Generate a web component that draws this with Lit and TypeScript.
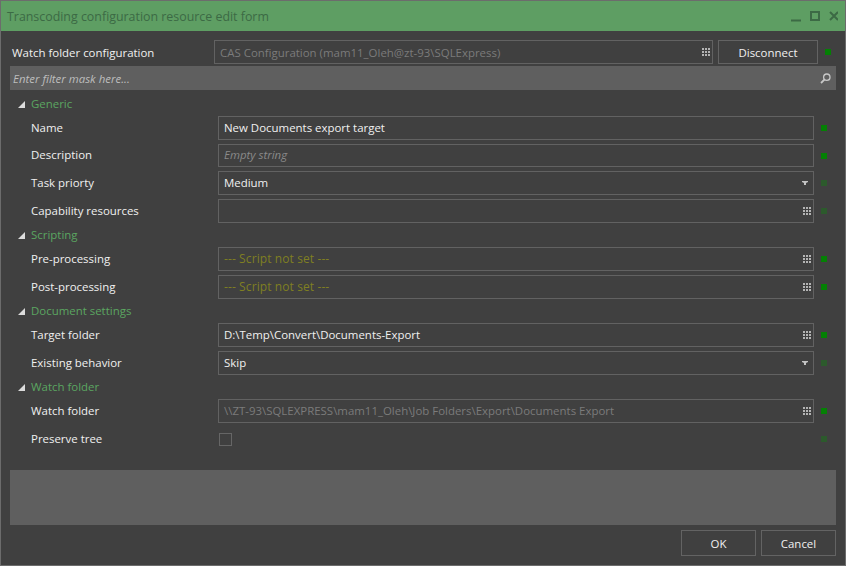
import { LitElement, html, css, nothing } from 'lit';
import { customElement } from 'lit/decorators.js';

type Row = {
  label: string;
  value?: string;
  kind?: 'text' | 'placeholder' | 'script' | 'disabled';
  editor?: 'dots' | 'combo' | 'check';
  dim?: boolean;
  short?: boolean;
};

type Group = { title: string; rows: Row[] };

const groups: Group[] = [
  {
    title: 'Generic',
    rows: [
      { label: 'Name', value: 'New Documents export target' },
      { label: 'Description', value: 'Empty string', kind: 'placeholder', short: true },
      { label: 'Task priorty', value: 'Medium', editor: 'combo', dim: true },
      { label: 'Capability resources', editor: 'dots', dim: true },
    ],
  },
  {
    title: 'Scripting',
    rows: [
      { label: 'Pre-processing', value: '--- Script not set ---', kind: 'script', editor: 'dots' },
      { label: 'Post-processing', value: '--- Script not set ---', kind: 'script', editor: 'dots' },
    ],
  },
  {
    title: 'Document settings',
    rows: [
      { label: 'Target folder', value: 'D:\\Temp\\Convert\\Documents-Export', editor: 'dots' },
      { label: 'Existing behavior', value: 'Skip', editor: 'combo', dim: true },
    ],
  },
  {
    title: 'Watch folder',
    rows: [
      {
        label: 'Watch folder',
        value: '\\\\ZT-93\\SQLEXPRESS\\mam11_Oleh\\Job Folders\\Export\\Documents Export',
        kind: 'disabled',
        editor: 'dots',
      },
      { label: 'Preserve tree', editor: 'check', dim: true },
    ],
  },
];

const dots = html`<svg class="dots" width="8" height="8" viewBox="0 0 8 8" fill="#b4b4b4">
  <rect x="0" y="0" width="2" height="2" /><rect x="3" y="0" width="2" height="2" /><rect x="6" y="0" width="2" height="2" />
  <rect x="0" y="3" width="2" height="2" /><rect x="3" y="3" width="2" height="2" /><rect x="6" y="3" width="2" height="2" />
  <rect x="0" y="6" width="2" height="2" /><rect x="3" y="6" width="2" height="2" /><rect x="6" y="6" width="2" height="2" />
</svg>`;

const arrow = html`<svg class="arrow" width="6" height="4" viewBox="0 0 6 4" fill="#c4c4c4">
  <path d="M0 0h6v1L4 2v2H2V2L0 1z" />
</svg>`;

@customElement('app-root')
export class AppRoot extends LitElement {
  static styles = css`
    :host {
      display: block;
      width: 846px;
      height: 566px;
      font-family: 'Open Sans', 'Noto Sans', sans-serif;
      font-size: 11.45px;
      color: #f0f0f0;
    }

    .window {
      box-sizing: border-box;
      width: 846px;
      height: 566px;
      display: flex;
      flex-direction: column;
      background: #404040;
      border: 1px solid #6c6c6c;
    }

    .titlebar {
      flex: none;
      height: 30px;
      display: flex;
      align-items: center;
      padding: 0 7px 0 6px;
      background: #5e9e63;
      color: #3c6a45;
      font-size: 12.4px;
    }

    .titlebar .title {
      flex: 1;
      padding-top: 1px;
    }

    .titlebar svg {
      display: block;
    }

    .content {
      flex: 1;
      display: flex;
      flex-direction: column;
      padding: 9px 9px 9px;
      min-height: 0;
    }

    .top {
      display: flex;
      align-items: center;
      height: 24px;
      padding-left: 2px;
    }

    .top .label {
      width: 202px;
      flex: none;
    }

    .top .field {
      width: 499px;
      flex: none;
    }

    .top .disconnect {
      width: 100px;
      margin-left: 5px;
      height: 24px;
    }

    .top .mark {
      margin-left: 7px;
    }

    .filter {
      height: 24px;
      margin-top: 2px;
      display: flex;
      align-items: center;
      justify-content: space-between;
      padding: 0 5px 0 3px;
      background: #5f5f5f;
      color: #bdbdbd;
      font-style: italic;
    }

    .groups {
      display: flex;
      flex-direction: column;
      gap: 4px;
      margin-top: 6px;
    }

    .header {
      box-sizing: border-box;
      height: 16px;
      display: flex;
      align-items: center;
      padding: 0 0 1px 8px;
      color: #5ba660;
    }

    .header svg {
      margin: 1px 6px 0 0;
    }

    .row {
      display: grid;
      grid-template-columns: 187px 596px auto;
      align-items: center;
      height: 24px;
      padding-left: 21px;
    }

    .row.short {
      height: 23px;
    }

    .row span {
      padding-bottom: 2px;
    }

    .field {
      box-sizing: border-box;
      height: 100%;
      display: flex;
      align-items: center;
      justify-content: space-between;
      padding: 0 2px 0 5px;
      border: 1px solid #626262;
      white-space: nowrap;
      overflow: hidden;
    }

    .top .field {
      height: 24px;
    }

    .placeholder {
      color: #8a8a8a;
      font-style: italic;
    }

    .script {
      color: #7f7f22;
      font-size: 12px;
      letter-spacing: 0.1px;
    }

    .disabled {
      color: #7b7b7b;
    }

    .dots {
      flex: none;
    }

    .arrow {
      flex: none;
      margin-right: 3px;
    }

    .check {
      box-sizing: border-box;
      width: 13px;
      height: 13px;
      margin-left: 1px;
      border: 1px solid #666666;
    }

    .mark {
      width: 6px;
      height: 6px;
      margin-left: 7px;
      background: #048004;
    }

    .mark.dim {
      background: #2c5a2c;
    }

    .info {
      flex: none;
      height: 55px;
      margin-top: auto;
      background: #5f5f5f;
    }

    .footer {
      flex: none;
      display: flex;
      justify-content: flex-end;
      gap: 5px;
      margin-top: 5px;
    }

    button {
      box-sizing: border-box;
      width: 75px;
      height: 26px;
      padding: 0;
      background: transparent;
      border: 1px solid #636363;
      color: #f0f0f0;
      font: inherit;
    }
  `;

  private renderEditor(row: Row) {
    if (row.editor === 'check') {
      return html`<div><div class="check"></div></div>`;
    }
    return html`<div class="field">
      <span class=${row.kind ?? 'text'}>${row.value ?? nothing}</span>
      ${row.editor === 'dots' ? dots : nothing} ${row.editor === 'combo' ? arrow : nothing}
    </div>`;
  }

  render() {
    return html`
      <div class="window">
        <div class="titlebar">
          <span class="title">Transcoding configuration resource edit form</span>
          <svg width="47" height="12" viewBox="0 0 47 12" fill="none" stroke="#3c6a45" stroke-width="2">
            <path d="M0 10.5h10" />
            <rect x="20" y="2" width="8" height="8" />
            <path d="M39 2l8 8M47 2l-8 8" />
          </svg>
        </div>
        <div class="content">
          <div class="top">
            <span class="label">Watch folder configuration</span>
            <div class="field">
              <span class="disabled">CAS Configuration (mam11_Oleh@zt-93\\SQLExpress)</span>
              ${dots}
            </div>
            <button class="disconnect">Disconnect</button>
            <div class="mark"></div>
          </div>
          <div class="filter">
            <span>Enter filter mask here...</span>
            <svg width="11" height="11" viewBox="0 0 11 11" fill="none" stroke="#c8c8c8">
              <circle cx="6.8" cy="4.2" r="3.2" stroke-width="1.3" />
              <path d="M4.4 6.6L1 10" stroke-width="1.8" />
            </svg>
          </div>
          <div class="groups">
            ${groups.map(
              (group) => html`
                <div class="header">
                  <svg width="7" height="7" viewBox="0 0 7 7" fill="#dcdcdc"><path d="M7 0v7H0z" /></svg>
                  ${group.title}
                </div>
                ${group.rows.map(
                  (row) => html`
                    <div class="row ${row.short ? 'short' : ''}">
                      <span>${row.label}</span>
                      ${this.renderEditor(row)}
                      <div class="mark ${row.dim ? 'dim' : ''}"></div>
                    </div>
                  `,
                )}
              `,
            )}
          </div>
          <div class="info"></div>
          <div class="footer">
            <button>OK</button>
            <button>Cancel</button>
          </div>
        </div>
      </div>
    `;
  }
}
